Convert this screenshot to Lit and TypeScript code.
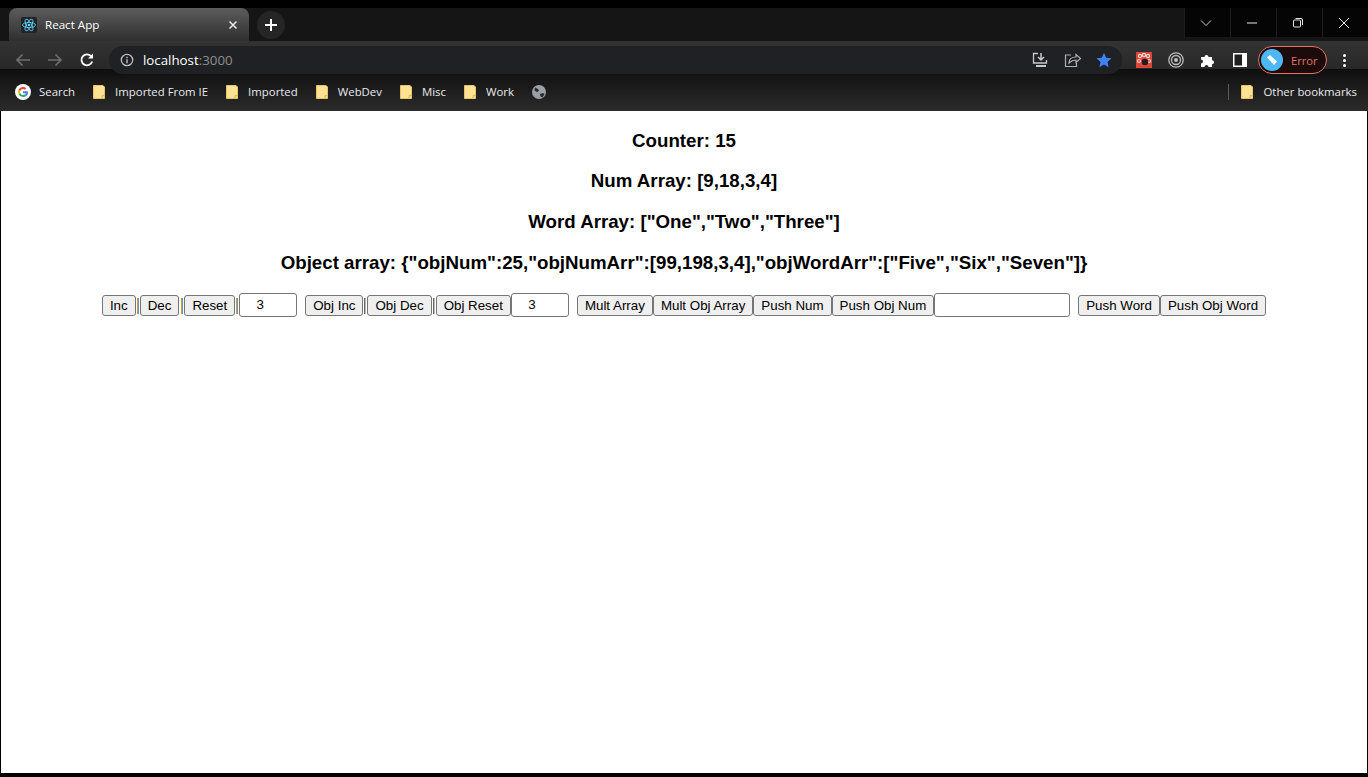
import { LitElement, html, css, svg } from 'lit';
import { customElement } from 'lit/decorators.js';

const folder = svg`<svg class="folder" width="12" height="14" viewBox="0 0 12 14"><path d="M0.5 0.5h9.5l1.500 1.500v11.500h-11z" fill="#fde293" stroke="#e8c468" stroke-width="1"/><path d="M9 13.500v-3h2.500" fill="#f5d67e" stroke="#d9b65a" stroke-width="1"/></svg>`;

const bookmarks = ['Imported From IE', 'Imported', 'WebDev', 'Misc', 'Work'];

@customElement('app-root')
class AppRoot extends LitElement {
  static styles = css`
    :host {
      display: flex;
      flex-direction: column;
      height: 777px;
      background: #000;
      overflow: hidden;
      font-family: 'Liberation Sans', Arial, sans-serif;
    }

    .tabstrip {
      display: flex;
      height: 33px;
      margin-top: 8px;
      background: #151515;
    }

    .tab {
      display: flex;
      align-items: center;
      box-sizing: border-box;
      width: 240px;
      margin-left: 9px;
      padding: 0 8px 0 12px;
      border-radius: 8px 8px 0 0;
      background: linear-gradient(#5c5c5c, #2f2f2f);
      color: #fff;
      font: 11.6px 'Open Sans', sans-serif;
    }

    .tab-title {
      flex: 1;
      margin: 0 0 1px 8px;
    }

    .new-tab {
      display: flex;
      align-items: center;
      justify-content: center;
      width: 28px;
      height: 28px;
      margin: 3px 0 0 8px;
      border-radius: 50%;
      background: #252525;
    }

    .spacer {
      flex: 1;
    }

    .win {
      display: flex;
      align-items: center;
      justify-content: center;
      width: 46px;
      height: 29px;
      padding-right: 4px;
      background: #050505;
      border-left: 1px solid #1c1c1c;
      box-sizing: border-box;
    }

    .toolbar {
      display: flex;
      align-items: center;
      box-sizing: border-box;
      height: 34px;
      padding: 5px 0 1px 14px;
      background: linear-gradient(#333 0, #282828 28px, #0c0c0c 28px, #0c0c0c 29px, #111 29px);
    }

    .nav {
      display: flex;
      width: 32px;
    }

    .reload {
      margin-left: 1px;
    }

    .omnibox {
      display: flex;
      flex: 1;
      align-items: center;
      height: 28px;
      margin: 0 0 0 14px;
      padding: 0 10px 0 11px;
      border-radius: 14px;
      background: #202124;
      font: 13.3px 'Open Sans', sans-serif;
      color: #fff;
    }

    .url {
      flex: 1;
      margin-left: 9px;
    }

    .url span {
      color: #8f8f8f;
    }

    .omni-icons {
      display: flex;
      gap: 14px;
      align-items: center;
    }

    .ext {
      display: flex;
      align-items: center;
      gap: 16px;
      margin-left: 14px;
    }

    .panel {
      margin-left: 1px;
    }

    .profile {
      display: flex;
      align-items: center;
      box-sizing: border-box;
      width: 69px;
      height: 28px;
      margin-left: 11px;
      padding-left: 2px;
      border: 1px solid #e57368;
      border-radius: 14px;
      background: #1b0b0a;
      color: #e57368;
      font: 11.2px 'Open Sans', sans-serif;
    }

    .avatar {
      display: flex;
      align-items: center;
      justify-content: center;
      width: 22px;
      height: 22px;
      margin-right: 8px;
      border-radius: 50%;
      background: #4db8f5;
    }

    .menu {
      display: flex;
      flex-direction: column;
      gap: 2px;
      margin: 0 22px 0 16px;
    }

    .menu i {
      display: block;
      width: 3px;
      height: 3px;
      border-radius: 50%;
      background: #fff;
    }

    .bookmarks {
      display: flex;
      align-items: center;
      box-sizing: border-box;
      height: 36px;
      padding: 0 11px 2px 15px;
      background: linear-gradient(#131313, #2b2b2b);
      color: #e8eaed;
      font: 11.4px 'Open Sans', sans-serif;
    }

    .mark {
      display: flex;
      align-items: center;
      margin-right: 18px;
    }

    .mark span {
      margin-bottom: 2px;
    }

    .mark .folder {
      margin-right: 10px;
    }

    .mark.google svg {
      margin: 0 8px 1px 0;
    }

    .mark.end {
      margin-right: 0;
    }

    .divider {
      width: 1px;
      height: 16px;
      margin-right: 12px;
      background: #5a5a5a;
    }

    .page {
      flex: 1;
      margin: 0 1px 4px;
      background: #fff;
      color: #000;
      text-align: center;
    }

    h3 {
      margin: 18.72px 0;
      font-size: 18.72px;
      font-weight: bold;
    }

    .controls {
      display: flex;
      justify-content: center;
      align-items: flex-start;
    }

    button {
      box-sizing: border-box;
      height: 21px;
      margin-top: 2px;
      padding: 0 7px;
      border: 1px solid #767676;
      border-radius: 3px;
      background: #efefef;
      color: #000;
      font: 13.33px 'Liberation Sans', Arial, sans-serif;
    }

    input {
      box-sizing: border-box;
      height: 24px;
      padding: 1px 2px;
      border: 1px solid #767676;
      border-radius: 3px;
      background: #fff;
      color: #000;
      font: 13.33px 'Liberation Sans', Arial, sans-serif;
    }

    .num {
      width: 58px;
      padding-right: 18px;
      text-align: center;
    }

    .text {
      width: 136px;
    }

    .sep {
      display: flex;
      justify-content: center;
      width: 4px;
      margin-top: 5px;
    }

    .sep::before {
      content: '';
      width: 2px;
      height: 16px;
      background: linear-gradient(90deg, #666 50%, #bbb 50%);
    }

    .sep.amber::before {
      background: linear-gradient(90deg, #d79a35 50%, #5a98c8 50%);
    }

    .sep.wide {
      width: 5px;
    }

    .gap {
      width: 8px;
    }
  `;

  protected render() {
    return html`
      <div class="tabstrip">
        <div class="tab">
          <svg width="16" height="16" viewBox="0 0 16 16">
            <rect width="16" height="16" rx="2" fill="#20232a" />
            <g fill="none" stroke="#61dafb" stroke-width="0.8">
              <ellipse cx="8" cy="8" rx="6.500" ry="2.600" />
              <ellipse cx="8" cy="8" rx="6.500" ry="2.600" transform="rotate(60 8 8)" />
              <ellipse cx="8" cy="8" rx="6.500" ry="2.600" transform="rotate(120 8 8)" />
            </g>
            <circle cx="8" cy="8" r="1.300" fill="#61dafb" />
          </svg>
          <span class="tab-title">React App</span>
          <svg width="16" height="16" viewBox="0 0 16 16">
            <path d="M4.500 4.500l7 7M11.500 4.500l-7 7" stroke="#e8eaed" stroke-width="1.500" />
          </svg>
        </div>
        <div class="new-tab">
          <svg width="14" height="14" viewBox="0 0 14 14">
            <path d="M7 1v12M1 7h12" stroke="#fff" stroke-width="2" />
          </svg>
        </div>
        <div class="spacer"></div>
        <div class="win">
          <svg width="12" height="8" viewBox="0 0 12 8">
            <path d="M1 1.500l5 5 5-5" fill="none" stroke="#c8c8c8" stroke-width="1" />
          </svg>
        </div>
        <div class="win">
          <svg width="12" height="2" viewBox="0 0 12 2"><path d="M1 1h10" stroke="#e8e8e8" stroke-width="1" /></svg>
        </div>
        <div class="win">
          <svg width="12" height="12" viewBox="0 0 12 12">
            <rect x="1.500" y="3" width="7" height="7" rx="1" fill="none" stroke="#e8e8e8" />
            <path d="M3.500 1.500h5.500a1.500 1.500 0 0 1 1.500 1.500v5" fill="none" stroke="#e8e8e8" />
          </svg>
        </div>
        <div class="win">
          <svg width="12" height="12" viewBox="0 0 12 12">
            <path d="M1 1l10 10M11 1l-10 10" stroke="#e8e8e8" stroke-width="1" />
          </svg>
        </div>
      </div>

      <div class="toolbar">
        <div class="nav">
          <svg width="18" height="16" viewBox="0 0 18 16">
            <path d="M16 8H3M8.500 2.500L3 8l5.500 5.500" fill="none" stroke="#6e6e6e" stroke-width="1.700" />
          </svg>
        </div>
        <div class="nav">
          <svg width="18" height="16" viewBox="0 0 18 16">
            <path d="M2 8h13M9.500 2.500L15 8l-5.500 5.500" fill="none" stroke="#6e6e6e" stroke-width="1.700" />
          </svg>
        </div>
        <svg class="reload" width="16" height="16" viewBox="0 0 16 16">
          <path d="M13.200 9.500a5.500 5.500 0 1 1-1-5.200" fill="none" stroke="#fff" stroke-width="1.800" />
          <path d="M14 1.500v5h-5z" fill="#fff" />
        </svg>
        <div class="omnibox">
          <svg width="14" height="14" viewBox="0 0 14 14">
            <circle cx="7" cy="7" r="5.700" fill="none" stroke="#bdbdbd" stroke-width="1.300" />
            <path d="M7 6.200v4M7 3.700v1.500" stroke="#bdbdbd" stroke-width="1.400" />
          </svg>
          <div class="url">localhost<span>:3000</span></div>
          <div class="omni-icons">
            <svg width="18" height="16" viewBox="0 0 18 16">
              <path d="M6 1.500H1.500v9.500h13V8" fill="none" stroke="#c8c8c8" stroke-width="1.300" />
              <path d="M9 1v6.500M6 5l3 3 3-3" fill="none" stroke="#c8c8c8" stroke-width="1.500" />
              <path d="M4 14h10" stroke="#c8c8c8" stroke-width="2" />
            </svg>
            <svg width="18" height="16" viewBox="0 0 18 16">
              <path d="M7 3H1.500v11.500h11V11" fill="none" stroke="#b0b0b0" stroke-width="1.200" />
              <path d="M5 11c0-4 3-6 7-6V2.500l4.500 4-4.500 4V8c-3 0-5 1-7 3z" fill="none" stroke="#b0b0b0" stroke-width="1.200" />
            </svg>
            <svg width="16" height="16" viewBox="0 0 16 16">
              <path d="M8 .8l2.200 4.900 5.300.6-4 3.600 1.100 5.300L8 12.500l-4.600 2.700 1.100-5.300-4-3.600 5.300-.6z" fill="#3f83f8" />
            </svg>
          </div>
        </div>
        <div class="ext">
          <svg width="16" height="16" viewBox="0 0 16 16">
            <rect width="16" height="16" fill="#d9473a" />
            <g fill="none" stroke="#f6d5d0" stroke-width="1.200">
              <circle cx="4" cy="4" r="1.600" /><circle cx="8" cy="3" r="1.600" /><circle cx="12" cy="4" r="1.600" />
              <circle cx="3" cy="9" r="1.500" /><circle cx="13" cy="9" r="1.500" />
            </g>
            <circle cx="9" cy="10" r="3.200" fill="#2a1a18" />
          </svg>
          <svg width="16" height="16" viewBox="0 0 16 16">
            <g fill="none" stroke="#bdbdbd">
              <circle cx="8" cy="8" r="7.200" stroke-width="1.300" />
              <circle cx="8" cy="8" r="4.500" stroke-width="1.300" />
            </g>
            <circle cx="8" cy="8" r="2" fill="#bdbdbd" />
          </svg>
          <svg width="16" height="16" viewBox="0 0 16 16">
            <path d="M1 5h3.500a2 2 0 1 1 4 0H12v3.200a2 2 0 1 1 0 4V15H8.500a2 2 0 1 0-4 0H1v-3.500a2 2 0 1 0 0-4z" fill="#fff" />
          </svg>
          <svg class="panel" width="14" height="14" viewBox="0 0 14 14">
            <rect width="14" height="14" fill="#fff" />
            <rect x="1.500" y="1.500" width="7.500" height="11" fill="#1f1f1f" />
          </svg>
        </div>
        <div class="profile">
          <div class="avatar">
            <svg width="16" height="16" viewBox="0 0 16 16">
              <path d="M3 5.500L6 3l7 6.500-3 3.500z" fill="#fff" />
            </svg>
          </div>
          Error
        </div>
        <div class="menu"><i></i><i></i><i></i></div>
      </div>

      <div class="bookmarks">
        <div class="mark google">
          <svg width="16" height="16" viewBox="0 0 16 16">
            <circle cx="8" cy="8" r="8" fill="#fff" />
            <path d="M13 8.200c0-.4 0-.7-.1-1H8v2h2.800a2.400 2.400 0 0 1-1 1.500l1.600 1.300c1-.9 1.600-2.200 1.600-3.800z" fill="#4285f4" />
            <path d="M8 13c1.400 0 2.500-.4 3.400-1.200L9.800 10.500c-.5.300-1 .5-1.800.5-1.300 0-2.400-.9-2.800-2.100L3.500 10.200A5 5 0 0 0 8 13z" fill="#34a853" />
            <path d="M5.200 8.900a3 3 0 0 1 0-1.800L3.500 5.800a5 5 0 0 0 0 4.400z" fill="#fbbc05" />
            <path d="M8 5c.8 0 1.400.3 1.900.8l1.500-1.500A5 5 0 0 0 3.500 5.800l1.700 1.300C5.600 5.900 6.700 5 8 5z" fill="#ea4335" />
          </svg>
          <span>Search</span>
        </div>
        ${bookmarks.map((b) => html`<div class="mark">${folder}<span>${b}</span></div>`)}
        <svg width="14" height="14" viewBox="0 0 14 14">
          <circle cx="7" cy="7" r="7" fill="#9aa0a6" />
          <path d="M3 2.500l3 1.500 1 2-2 1-2.500-1.500zM8 9l3-1 1.500 1-2 3.500-2-1z" fill="#2a2a2a" />
        </svg>
        <div class="spacer"></div>
        <div class="divider"></div>
        <div class="mark end">${folder}<span>Other bookmarks</span></div>
      </div>

      <main class="page">
        <h3>Counter: 15</h3>
        <h3>Num Array: [9,18,3,4]</h3>
        <h3>Word Array: ["One","Two","Three"]</h3>
        <h3>Object array: {"objNum":25,"objNumArr":[99,198,3,4],"objWordArr":["Five","Six","Seven"]}</h3>
        <div class="controls">
          <button>Inc</button><span class="sep amber"></span>
          <button>Dec</button><span class="sep amber wide"></span>
          <button>Reset</button><span class="sep amber"></span>
          <input class="num" value="3" />
          <span class="gap"></span>
          <button>Obj Inc</button><span class="sep"></span>
          <button>Obj Dec</button><span class="sep"></span>
          <button>Obj Reset</button>
          <input class="num" value="3" />
          <span class="gap"></span>
          <button>Mult Array</button>
          <button>Mult Obj Array</button>
          <button>Push Num</button>
          <button>Push Obj Num</button>
          <input class="text" />
          <span class="gap"></span>
          <button>Push Word</button>
          <button>Push Obj Word</button>
        </div>
      </main>
    `;
  }
}
